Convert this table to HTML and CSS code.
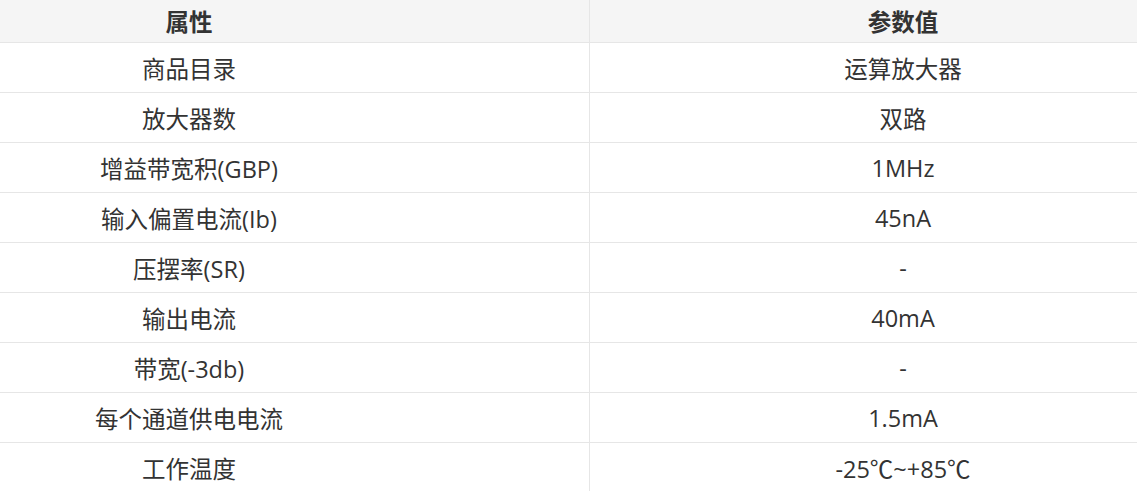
FILE: index.html
```html
<!DOCTYPE html>
<html lang="zh">
<head>
<meta charset="utf-8">
<link rel="stylesheet" href="styles.css">
</head>
<body>
<div class="wrap">
<table class="spec">
  <thead>
    <tr><th class="c1">属性</th><th class="c2">参数值</th></tr>
  </thead>
  <tbody>
    <tr><td>商品目录</td><td>运算放大器</td></tr>
    <tr><td>放大器数</td><td>双路</td></tr>
    <tr><td>增益带宽积(GBP)</td><td>1MHz</td></tr>
    <tr><td>输入偏置电流(Ib)</td><td>45nA</td></tr>
    <tr><td>压摆率(SR)</td><td>-</td></tr>
    <tr><td>输出电流</td><td>40mA</td></tr>
    <tr><td>带宽(-3db)</td><td>-</td></tr>
    <tr><td>每个通道供电电流</td><td>1.5mA</td></tr>
    <tr><td>工作温度</td><td>-25℃~+85℃</td></tr>
  </tbody>
</table>
</div>
</body>
</html>
```

FILE: styles.css
```css
html, body {
  margin: 0;
  padding: 0;
  background: #fff;
  overflow: hidden;
}
.wrap {
  width: 1137px;
  overflow: hidden;
}
.spec {
  margin-left: -212px;
  width: 1429px;
  border-collapse: collapse;
  table-layout: fixed;
  font-family: "Open Sans", "Noto Sans CJK SC", sans-serif;
  font-size: 23.5px;
  color: #333;
}
.spec .c1 { width: 800px; }
.spec th, .spec td {
  text-align: center;
  padding: 0;
  border: 1px solid #e6e6e6;
  border-top: none;
}
.spec th {
  background: #f5f5f5;
  font-weight: bold;
  height: 42px;
  color: #333;
}
.spec td {
  height: 49px;
  font-weight: normal;
}
```
